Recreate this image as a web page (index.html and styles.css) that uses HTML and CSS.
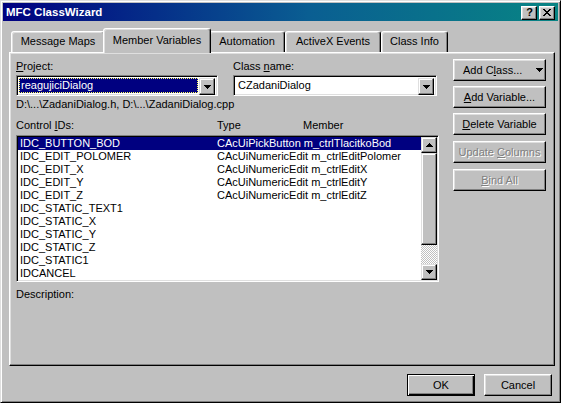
FILE: index.html
```html
<!DOCTYPE html>
<html>
<head>
<meta charset="utf-8">
<link rel="stylesheet" href="styles.css">
</head>
<body>
<div class="window">
  <div class="titlebar">
    <span class="title">MFC ClassWizard</span>
    <div class="tbtns">
      <div class="tbtn"><span class="q">?</span></div>
      <div class="tbtn"><svg width="8" height="7" shape-rendering="crispEdges"><path d="M0 0h2v1h-2zM6 0h2v1h-2zM1 1h2v1h-2zM5 1h2v1h-2zM2 2h4v1h-4zM3 3h2v1h-2zM2 4h4v1h-4zM1 5h2v1h-2zM5 5h2v1h-2zM0 6h2v1h-2zM6 6h2v1h-2z" fill="#000"/></svg></div>
    </div>
  </div>
  <div class="client">
    <div class="tabs">
      <div class="tab t1">Message Maps</div>
      <div class="tab t2 sel">Member Variables</div>
      <div class="tab t3">Automation</div>
      <div class="tab t4">ActiveX Events</div>
      <div class="tab t5">Class Info</div>
    </div>
    <div class="panel">
      <div class="leftcol">
        <div class="fields">
          <div class="field f1">
            <div class="label"><u>P</u>roject:</div>
            <div class="combo">
              <div class="value selval"><span>reagujiciDialog</span></div>
              <div class="dd"><svg width="7" height="4" shape-rendering="crispEdges"><path d="M0 0h7v1h-1v1h-1v1h-1v1h-1v-1h-1v-1h-1v-1h-1z" fill="#000"/></svg></div>
            </div>
          </div>
          <div class="field f2">
            <div class="label">Class <u>n</u>ame:</div>
            <div class="combo">
              <div class="value"><span>CZadaniDialog</span></div>
              <div class="dd"><svg width="7" height="4" shape-rendering="crispEdges"><path d="M0 0h7v1h-1v1h-1v1h-1v1h-1v-1h-1v-1h-1v-1h-1z" fill="#000"/></svg></div>
            </div>
          </div>
        </div>
        <div class="path">D:\...\ZadaniDialog.h, D:\...\ZadaniDialog.cpp</div>
        <div class="heads">
          <span class="h1">Control <u>I</u>Ds:</span>
          <span class="h2">Type</span>
          <span class="h3">Member</span>
        </div>
        <div class="listbox">
          <div class="rows">
            <div class="row sel"><span class="c1">IDC_BUTTON_BOD</span><span class="c2">CAcUiPickButton m_ctrlTlacitkoBod</span></div>
            <div class="row"><span class="c1">IDC_EDIT_POLOMER</span><span class="c2">CAcUiNumericEdit m_ctrlEditPolomer</span></div>
            <div class="row"><span class="c1">IDC_EDIT_X</span><span class="c2">CAcUiNumericEdit m_ctrlEditX</span></div>
            <div class="row"><span class="c1">IDC_EDIT_Y</span><span class="c2">CAcUiNumericEdit m_ctrlEditY</span></div>
            <div class="row"><span class="c1">IDC_EDIT_Z</span><span class="c2">CAcUiNumericEdit m_ctrlEditZ</span></div>
            <div class="row"><span class="c1">IDC_STATIC_TEXT1</span></div>
            <div class="row"><span class="c1">IDC_STATIC_X</span></div>
            <div class="row"><span class="c1">IDC_STATIC_Y</span></div>
            <div class="row"><span class="c1">IDC_STATIC_Z</span></div>
            <div class="row"><span class="c1">IDC_STATIC1</span></div>
            <div class="row"><span class="c1">IDCANCEL</span></div>
          </div>
          <div class="vscroll">
            <div class="sbtn"><svg width="7" height="4" shape-rendering="crispEdges"><path d="M3 0h1v1h1v1h1v1h1v1h-7v-1h1v-1h1v-1h1z" fill="#000"/></svg></div>
            <div class="thumb"></div>
            <div class="track"></div>
            <div class="sbtn"><svg width="7" height="4" shape-rendering="crispEdges"><path d="M0 0h7v1h-1v1h-1v1h-1v1h-1v-1h-1v-1h-1v-1h-1z" fill="#000"/></svg></div>
          </div>
        </div>
        <div class="desc">Description:</div>
      </div>
      <div class="rightcol">
        <div class="btn addclass"><span>Add C<u>l</u>ass...</span><svg width="7" height="4" shape-rendering="crispEdges"><path d="M0 0h7v1h-1v1h-1v1h-1v1h-1v-1h-1v-1h-1v-1h-1z" fill="#000"/></svg></div>
        <div class="btn b2"><span><u>A</u>dd Variable...</span></div>
        <div class="btn b3"><span><u>D</u>elete Variable</span></div>
        <div class="btn b4 dis"><span>Update <u>C</u>olumns</span></div>
        <div class="btn b5 dis"><span><u>B</u>ind All</span></div>
      </div>
    </div>
    <div class="footer">
      <div class="btn ok default">OK</div>
      <div class="btn cancel">Cancel</div>
    </div>
  </div>
</div>
</body>
</html>
```
FILE: styles.css
```css
* { box-sizing: border-box; }
html, body { margin: 0; padding: 0; }
body {
  width: 561px; height: 403px; overflow: hidden;
  background: #c0c0c0;
  font-family: "Liberation Sans", Arial, sans-serif;
  font-size: 11px; line-height: 13px; color: #000;
}
u { text-decoration: underline; text-underline-offset: 1px; }
.window {
  width: 561px; height: 403px;
  background: #c0c0c0;
  border: 1px solid; border-color: #dfdfdf #000 #000 #dfdfdf;
  box-shadow: inset 1px 1px #fff, inset -1px -1px #808080;
  padding: 2px;
  display: flex; flex-direction: column;
}
.titlebar {
  height: 18px; flex: none;
  background: linear-gradient(to right, #000080, #0a5e92 55%, #088484);
  display: flex; align-items: center;
  padding-left: 3px;
}
.title { color: #fff; font-weight: bold; font-size: 11.5px; }
.tbtns { margin-left: auto; margin-right: 3px; display: flex; gap: 2px; margin-top: 1px; }
.tbtn {
  width: 16px; height: 14px; background: #c0c0c0;
  border: 1px solid; border-color: #fff #000 #000 #fff;
  box-shadow: inset -1px -1px #808080, inset 1px 1px #dfdfdf;
  display: flex; align-items: center; justify-content: center;
}
.tbtn .q { font-weight: bold; font-size: 11px; line-height: 11px; margin-left: 1px; }
.client { flex: 1; display: flex; flex-direction: column; padding: 0 3px 0 6px; }
.tabs { height: 24px; margin-top: 7px; display: flex; align-items: flex-end; flex: none; position: relative; z-index: 2; }
.tab {
  height: 21px; padding-top: 3px; text-align: center;
  border: 1px solid; border-bottom: none;
  border-color: #fff #000 transparent #fff;
  border-radius: 3px 3px 0 0;
  box-shadow: inset -1px 0 #808080, inset 1px 1px #dfdfdf;
  background: #c0c0c0;
}
.t1 { width: 94px; margin-left: 2px; }
.t2 { width: 108px; }
.t3 { width: 76px; }
.t4 { width: 96px; }
.t5 { width: 67px; }
.tab.sel { height: 25px; margin: 0 -2px -1px -2px; padding-top: 5px; position: relative; z-index: 3; }
.panel {
  height: 314px; flex: none;
  border: 1px solid; border-color: #fff #000 #000 #fff;
  box-shadow: inset -1px -1px #808080, inset 1px 1px #dfdfdf;
  display: flex; padding: 0 0 0 6px;
}
.leftcol { width: 423px; display: flex; flex-direction: column; }
.rightcol { width: 93px; margin-left: 14px; display: flex; flex-direction: column; padding-top: 6px; }
.fields { display: flex; margin-top: 7px; }
.f1 { width: 202px; }
.f2 { width: 204px; margin-left: 15px; }
.label { height: 13px; }
.combo {
  margin-top: 2px; height: 21px; background: #fff;
  border: 1px solid; border-color: #808080 #fff #fff #808080;
  box-shadow: inset 1px 1px #000, inset -1px -1px #dfdfdf;
  display: flex; padding: 2px;
}
.value { flex: 1; display: flex; align-items: center; padding-left: 1px; }
.f2 .value { padding-left: 2px; }
.selval { background: #000080; color: #fff; border: 1px dotted #ffff60; margin-right: 1px; padding-left: 1px; }
.dd {
  width: 16px; height: 17px; background: #c0c0c0;
  border: 1px solid; border-color: #dfdfdf #000 #000 #dfdfdf;
  box-shadow: inset -1px -1px #808080, inset 1px 1px #fff;
  display: flex; align-items: center; justify-content: center;
}
.path { margin-top: 2px; height: 13px; }
.heads { margin-top: 8px; height: 13px; display: flex; }
.h1 { width: 201px; }
.h2 { width: 86px; }
.listbox {
  margin-top: 3px; height: 147px; background: #fff;
  border: 1px solid; border-color: #808080 #fff #fff #808080;
  box-shadow: inset 1px 1px #000, inset -1px -1px #dfdfdf;
  display: flex; padding: 1px;
}
.rows { flex: 1; display: flex; flex-direction: column; }
.row { height: 13px; display: flex; white-space: nowrap; }
.row.sel { background: #000080; color: #fff; }
.c1 { width: 199px; padding-left: 2px; }
.vscroll { width: 16px; display: flex; flex-direction: column; }
.sbtn, .thumb {
  background: #c0c0c0;
  border: 1px solid; border-color: #dfdfdf #000 #000 #dfdfdf;
  box-shadow: inset -1px -1px #808080, inset 1px 1px #fff;
}
.sbtn { height: 16px; display: flex; align-items: center; justify-content: center; }
.thumb { height: 92px; }
.track { flex: 1; background: repeating-conic-gradient(#fff 0 25%, #c0c0c0 0 50%) 0 0 / 2px 2px; }
.desc { margin-top: 6px; height: 13px; }
.btn {
  height: 22px; background: #c0c0c0;
  border: 1px solid; border-color: #fff #000 #000 #fff;
  box-shadow: inset -1px -1px #808080, inset 1px 1px #dfdfdf;
  display: flex; align-items: center; justify-content: center;
  white-space: nowrap;
}
.addclass { justify-content: flex-start; padding-left: 9px; }
.addclass svg { margin-left: 14px; }
.b2, .b3 { margin-top: 5px; }
.b4, .b5 { margin-top: 6px; }
.dis { color: #808080; text-shadow: 1px 1px 0 #fff; }
.footer { display: flex; justify-content: flex-end; margin-top: 8px; padding-right: 3px; gap: 9px; }
.ok, .cancel { width: 68px; }
.default {
  border: 1px solid #000;
  box-shadow: inset 1px 1px #fff, inset -1px -1px #000, inset -2px -2px #808080;
}
```
